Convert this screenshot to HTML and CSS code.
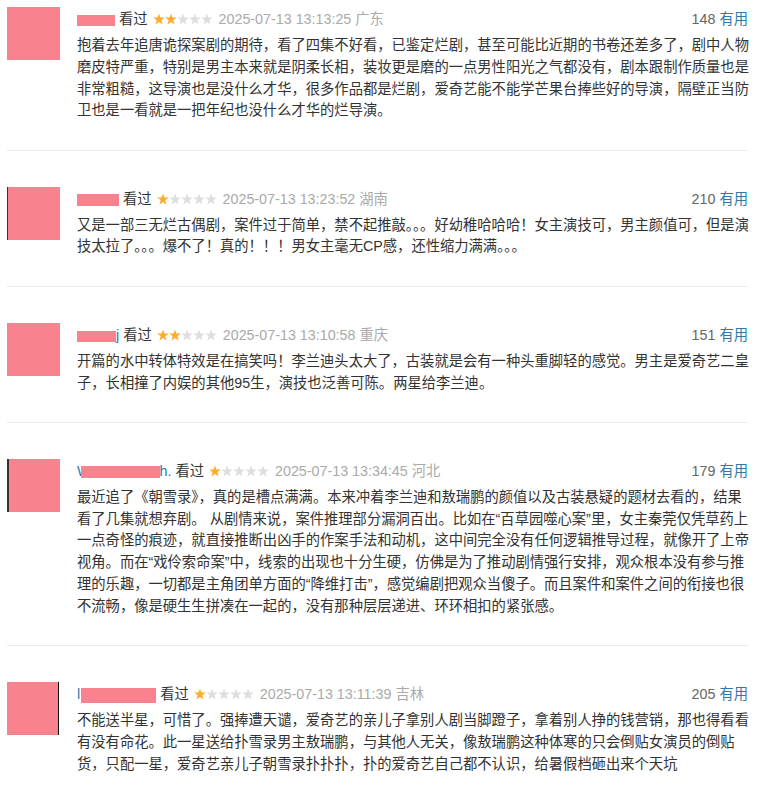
FILE: index.html
```html
<!DOCTYPE html>
<html lang="zh-CN">

<head>
    <meta charset="UTF-8">
    <meta name="viewport" content="width=device-width, initial-scale=1.0">
    <title>短评</title>
    <link rel="stylesheet" href="styles.css">
</head>

<body>
    <svg class="sprite" xmlns="http://www.w3.org/2000/svg">
        <symbol id="star" viewBox="0 0 12 12">
            <polygon points="6,0.4 7.44,4.52 11.8,4.62 8.33,7.26 9.59,11.43 6,8.95 2.41,11.43 3.67,7.26 0.2,4.62 4.56,4.52" />
        </symbol>
    </svg>

    <div class="comments">
        <div class="comment">
            <div class="avatar"></div>
            <div class="comment-body">
                <div class="comment-info">
                    <span class="meta">
                        <a class="name"><span class="mask mask-1"></span></a>
                        <span class="watched">看过</span>
                        <span class="stars">
                            <svg class="star on"><use href="#star" /></svg><svg class="star on"><use href="#star" /></svg><svg class="star"><use href="#star" /></svg><svg class="star"><use href="#star" /></svg><svg class="star"><use href="#star" /></svg>
                        </span>
                        <span class="time">2025-07-13 13:13:25</span>
                        <span class="location">广东</span>
                    </span>
                    <span class="votes"><span class="count">148</span> <a class="useful">有用</a></span>
                </div>
                <p class="short">抱着去年追唐诡探案剧的期待，看了四集不好看，已鉴定烂剧，甚至可能比近期的书卷还差多了，剧中人物磨皮特严重，特别是男主本来就是阴柔长相，装妆更是磨的一点男性阳光之气都没有，剧本跟制作质量也是非常粗糙，这导演也是没什么才华，很多作品都是烂剧，爱奇艺能不能学芒果台捧些好的导演，隔壁正当防卫也是一看就是一把年纪也没什么才华的烂导演。</p>
            </div>
        </div>

        <div class="comment">
            <div class="avatar edge-left"></div>
            <div class="comment-body">
                <div class="comment-info">
                    <span class="meta">
                        <a class="name"><span class="mask mask-2"></span></a>
                        <span class="watched">看过</span>
                        <span class="stars">
                            <svg class="star on"><use href="#star" /></svg><svg class="star"><use href="#star" /></svg><svg class="star"><use href="#star" /></svg><svg class="star"><use href="#star" /></svg><svg class="star"><use href="#star" /></svg>
                        </span>
                        <span class="time">2025-07-13 13:23:52</span>
                        <span class="location">湖南</span>
                    </span>
                    <span class="votes"><span class="count">210</span> <a class="useful">有用</a></span>
                </div>
                <p class="short">又是一部三无烂古偶剧，案件过于简单，禁不起推敲。。。好幼稚哈哈哈！女主演技可，男主颜值可，但是演技太拉了。。。爆不了！真的！！！男女主毫无CP感，还性缩力满满。。。</p>
            </div>
        </div>

        <div class="comment">
            <div class="avatar"></div>
            <div class="comment-body">
                <div class="comment-info">
                    <span class="meta">
                        <a class="name"><span class="mask mask-3"></span>j</a>
                        <span class="watched">看过</span>
                        <span class="stars">
                            <svg class="star on"><use href="#star" /></svg><svg class="star on"><use href="#star" /></svg><svg class="star"><use href="#star" /></svg><svg class="star"><use href="#star" /></svg><svg class="star"><use href="#star" /></svg>
                        </span>
                        <span class="time">2025-07-13 13:10:58</span>
                        <span class="location">重庆</span>
                    </span>
                    <span class="votes"><span class="count">151</span> <a class="useful">有用</a></span>
                </div>
                <p class="short">开篇的水中转体特效是在搞笑吗！李兰迪头太大了，古装就是会有一种头重脚轻的感觉。男主是爱奇艺二皇子，长相撞了内娱的其他95生，演技也泛善可陈。两星给李兰迪。</p>
            </div>
        </div>

        <div class="comment">
            <div class="avatar edge-left dark"></div>
            <div class="comment-body">
                <div class="comment-info">
                    <span class="meta">
                        <a class="name">W<span class="mask mask-4"></span>h.</a>
                        <span class="watched">看过</span>
                        <span class="stars">
                            <svg class="star on"><use href="#star" /></svg><svg class="star"><use href="#star" /></svg><svg class="star"><use href="#star" /></svg><svg class="star"><use href="#star" /></svg><svg class="star"><use href="#star" /></svg>
                        </span>
                        <span class="time">2025-07-13 13:34:45</span>
                        <span class="location">河北</span>
                    </span>
                    <span class="votes"><span class="count">179</span> <a class="useful">有用</a></span>
                </div>
                <p class="short">最近追了《朝雪录》，真的是槽点满满。本来冲着李兰迪和敖瑞鹏的颜值以及古装悬疑的题材去看的，结果看了几集就想弃剧。 从剧情来说，案件推理部分漏洞百出。比如在“百草园噬心案”里，女主秦莞仅凭草药上一点奇怪的痕迹，就直接推断出凶手的作案手法和动机，这中间完全没有任何逻辑推导过程，就像开了上帝视角。而在“戏伶索命案”中，线索的出现也十分生硬，仿佛是为了推动剧情强行安排，观众根本没有参与推理的乐趣，一切都是主角团单方面的“降维打击”，感觉编剧把观众当傻子。而且案件和案件之间的衔接也很不流畅，像是硬生生拼凑在一起的，没有那种层层递进、环环相扣的紧张感。</p>
            </div>
        </div>

        <div class="comment">
            <div class="avatar edge-right"></div>
            <div class="comment-body">
                <div class="comment-info">
                    <span class="meta">
                        <a class="name">l<span class="mask mask-5"></span></a>
                        <span class="watched">看过</span>
                        <span class="stars">
                            <svg class="star on"><use href="#star" /></svg><svg class="star"><use href="#star" /></svg><svg class="star"><use href="#star" /></svg><svg class="star"><use href="#star" /></svg><svg class="star"><use href="#star" /></svg>
                        </span>
                        <span class="time">2025-07-13 13:11:39</span>
                        <span class="location">吉林</span>
                    </span>
                    <span class="votes"><span class="count">205</span> <a class="useful">有用</a></span>
                </div>
                <p class="short">不能送半星，可惜了。强捧遭天谴，爱奇艺的亲儿子拿别人剧当脚蹬子，拿着别人挣的钱营销，那也得看看有没有命花。此一星送给扑雪录男主敖瑞鹏，与其他人无关，像敖瑞鹏这种体寒的只会倒贴女演员的倒贴货，只配一星，爱奇艺亲儿子朝雪录扑扑扑，扑的爱奇艺自己都不认识，给暑假档砸出来个天坑</p>
            </div>
        </div>
    </div>
</body>

</html>
```

FILE: styles.css
```css
body {
    margin: 0;
    background-color: #fff;
    font-family: "Liberation Sans", "Noto Sans CJK SC", sans-serif;
    color: #333;
}

.sprite {
    display: none;
}

.comments {
    width: 741px;
    padding: 7px 0 0 7px;
}

.comment {
    display: flex;
    gap: 17px;
    padding: 36px 0 27.5px;
    border-bottom: 1px solid #ebebeb;
}

.comment:first-child {
    padding-top: 0;
}

.avatar {
    flex: none;
    box-sizing: border-box;
    width: 53px;
    height: 53px;
    background-color: #f8838f;
}

.avatar.edge-left {
    border-left: 1px solid #3a3030;
}

.avatar.edge-left.dark {
    border-left-width: 2px;
}

.avatar.edge-right {
    width: 52px;
    margin-right: 1px;
    border-right: 1px solid #111;
}

.comment-body {
    flex: none;
    width: 675px;
    margin-right: -4px;
    padding-top: 1px;
}

.comment-info {
    display: flex;
    justify-content: space-between;
    align-items: center;
    height: 22px;
    padding-right: 4px;
    font-size: 14.3px;
    line-height: 22px;
    white-space: nowrap;
}

.name {
    color: #37a;
}

.mask {
    display: inline-block;
    height: 11px;
    vertical-align: middle;
    background-color: #f8838f;
}

.mask-1 {
    width: 38px;
}

.mask-2 {
    width: 42px;
    height: 12px;
}

.mask-3 {
    width: 39px;
}

.mask-4 {
    width: 79px;
    height: 12px;
    margin-left: -10px;
}

.mask-5 {
    width: 75px;
    height: 15px;
    margin-left: 1px;
}

.watched {
    color: #333;
}

.stars {
    display: inline-flex;
    margin: 0 2px 0 1px;
    vertical-align: -1px;
}

.star {
    width: 12px;
    height: 12px;
    fill: #dedede;
}

.star.on {
    fill: #ffac2d;
}

.time,
.location {
    color: #aaa;
}

.count {
    color: #666;
}

.useful {
    color: #37a;
}

.short {
    margin: 5px 0 0;
    font-size: 14.3px;
    line-height: 21.8px;
    color: #333;
}
```
